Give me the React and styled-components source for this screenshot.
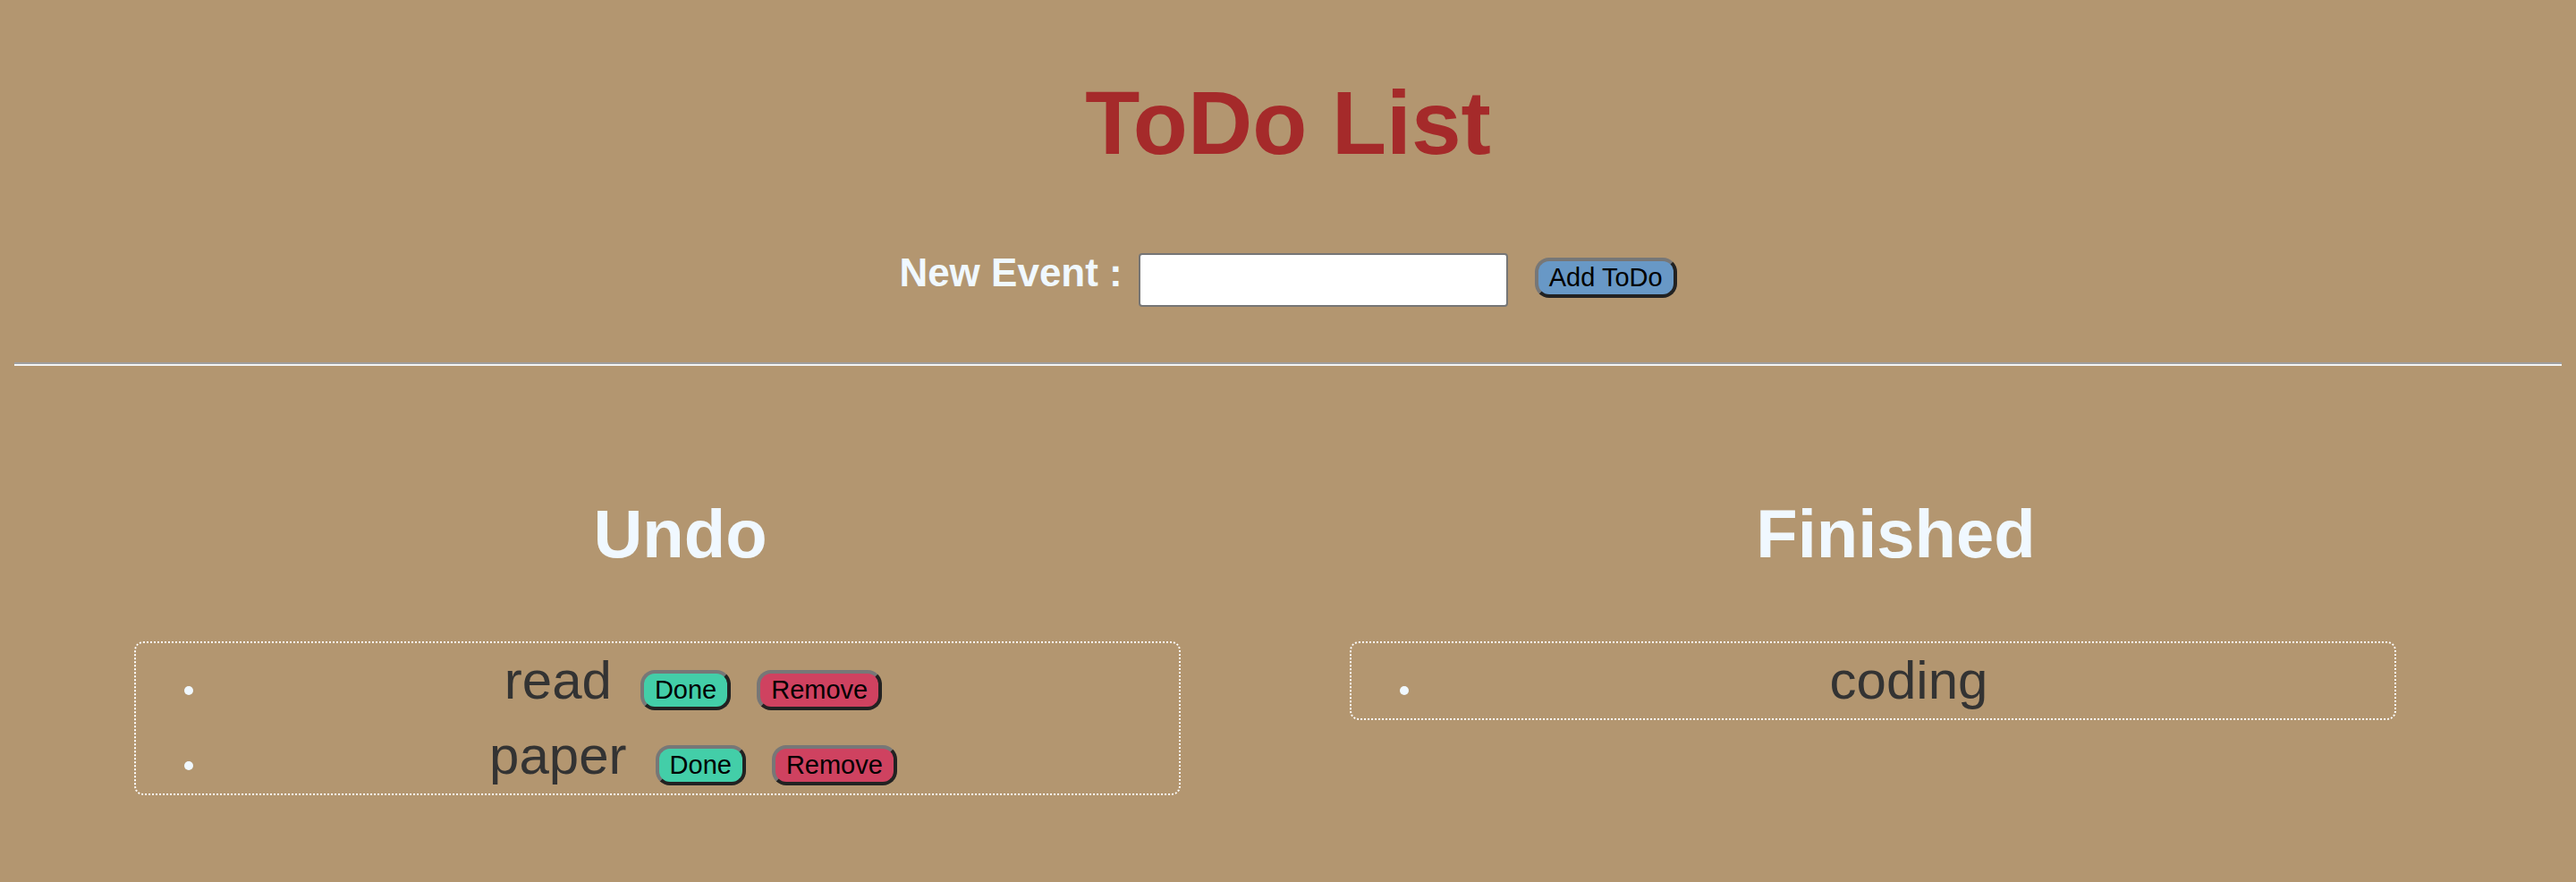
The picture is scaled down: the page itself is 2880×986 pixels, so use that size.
import React, { useState } from "react";
import styled, { createGlobalStyle } from "styled-components";

const GlobalStyle = createGlobalStyle`
  html, body {
    margin: 0;
    background-color: #b39670;
  }
  body {
    font-family: "Liberation Sans", Arial, sans-serif;
  }
`;

const App = () => {
    const [text, setText] = useState("");
    const [undo, setUndo] = useState(["read", "paper"]);
    const [finished, setFinished] = useState(["coding"]);

    const addTodo = () => {
        if (!text.trim()) return;
        setUndo([...undo, text.trim()]);
        setText("");
    };

    return (
        <Page>
            <GlobalStyle />
            <Title>ToDo List</Title>
            <Form>
                <Label htmlFor="event">New Event :</Label>
                <Input
                    id="event"
                    type="text"
                    value={text}
                    onChange={(e) => setText(e.target.value)}
                />
                <AddButton $bg="#6898c6" onClick={addTodo}>Add ToDo</AddButton>
            </Form>
            <Divider />
            <Columns>
                <Column>
                    <Heading>Undo</Heading>
                    <List>
                        {undo.map((item, i) => (
                            <Item key={item + i}>
                                <ItemText>{item}</ItemText>
                                <ActionButton
                                    $bg="#43cea8"
                                    $gap="32px"
                                    onClick={() => {
                                        setUndo(undo.filter((_, j) => j !== i));
                                        setFinished([...finished, item]);
                                    }}
                                >Done</ActionButton>
                                <ActionButton
                                    $bg="#cf4260"
                                    $gap="29px"
                                    onClick={() => setUndo(undo.filter((_, j) => j !== i))}
                                >Remove</ActionButton>
                            </Item>
                        ))}
                    </List>
                </Column>
                <Column>
                    <Heading>Finished</Heading>
                    <List>
                        {finished.map((item, i) => (
                            <Item key={item + i}>
                                <ItemText>{item}</ItemText>
                            </Item>
                        ))}
                    </List>
                </Column>
            </Columns>
        </Page>
    );
};

const Page = styled.div`
    padding: 0 16px;
`;

const Title = styled.h1`
    margin: 80px 0 0;
    text-align: center;
    font-size: 100px;
    line-height: 115px;
    font-weight: bold;
    color: #a52a2a;
`;

const Form = styled.div`
    display: flex;
    justify-content: center;
    align-items: flex-start;
    margin-top: 85px;
`;

const Label = styled.label`
    font-size: 44px;
    font-weight: bold;
    color: aliceblue;
    margin-right: 18px;
`;

const Input = styled.input`
    box-sizing: border-box;
    width: 413px;
    height: 60px;
    margin: 3px 0 0;
    border: 2px solid #767676;
    border-radius: 4px;
    background-color: #ffffff;
    font-size: 28px;
    padding: 0 8px;
`;

const Button = styled.button`
    font-family: "Liberation Sans", Arial, sans-serif;
    font-size: 29px;
    line-height: normal;
    color: #000000;
    padding: 2px 12px;
    border-style: solid;
    border-width: 4px;
    border-color: #777777 #222222 #222222 #777777;
    border-radius: 16px;
    background-color: ${(props) => props.$bg};
    cursor: pointer;
`;

const AddButton = styled(Button)`
    margin: 8px 0 0 30px;
`;

const ActionButton = styled(Button)`
    margin-left: ${(props) => props.$gap};
`;

const Divider = styled.hr`
    margin: 62px 0 0;
    height: 0;
    border: none;
    border-top: 2px solid #9e9e9e;
    border-bottom: 2px solid #f4f4f4;
`;

const Columns = styled.div`
    display: grid;
    grid-template-columns: 1fr 1fr;
    padding: 0 65px;
`;

const Column = styled.div`
    display: flex;
    flex-direction: column;
`;

const Heading = styled.h2`
    margin: 144px 0 0;
    text-align: center;
    font-size: 76px;
    font-weight: bold;
    color: aliceblue;
`;

const List = styled.ul`
    box-sizing: border-box;
    width: 1170px;
    margin: 77px 0 0 69px;
    padding: 0 0 0 80px;
    border: 2px dotted #ffffff;
    border-radius: 10px;
    list-style: disc;
`;

const Item = styled.li`
    font-size: 32px;
    color: aliceblue;
    text-align: center;
`;

const ItemText = styled.span`
    font-size: 60px;
    line-height: 84px;
    color: #333333;
`;

export default App;
